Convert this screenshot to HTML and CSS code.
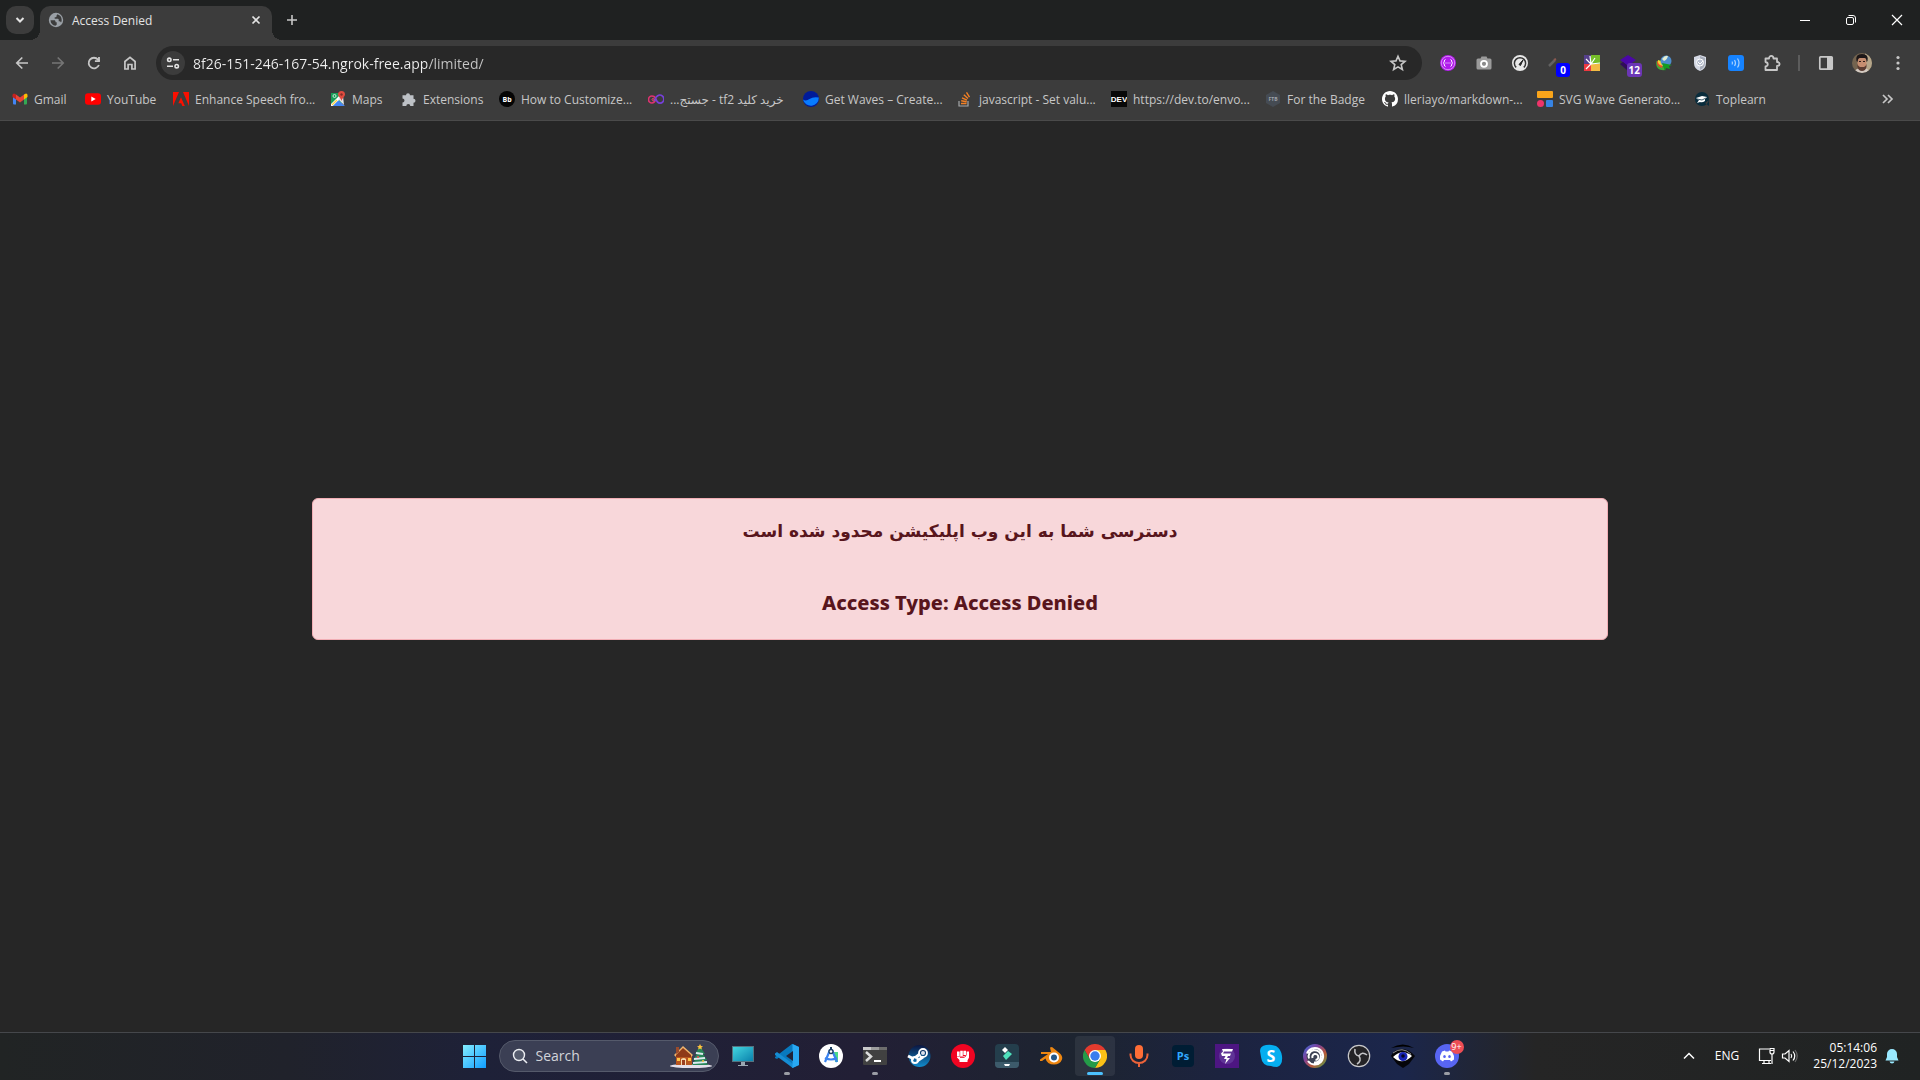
FILE: index.html
```
<!DOCTYPE html>
<html lang="en">
<head>
<meta charset="utf-8">
<title>Access Denied</title>
<link rel="stylesheet" href="styles.css">
</head>
<body>
<div class="screen">
<header class="browser">
  <div class="tabstrip">
    <button class="tab-search" aria-label="Search tabs"><svg viewBox="0 0 16 16" width="16" height="16"><path d="M4.5 6 8 9.5 11.500 6" fill="none" stroke="#e3e3e3" stroke-width="2"/></svg></button>
    <div class="tab">
      <svg viewBox="0 0 16 16" width="16" height="16"><circle cx="8" cy="8" r="7.200" fill="#9aa0a6"/><path d="M2.500 8.200h3.700c.9 0 1.300.6 1.300 1.300v.8h1.200v2.500l-1.300.9C4.700 13.500 2.600 11.300 2.500 8.200ZM9 2.300c2.800.4 4.700 2.700 4.700 5.600 0 1-.3 1.900-.7 2.600-.3-.8-.9-1.200-1.700-1.200h-.6V7.600c0-.5-.3-.8-.8-.8H6.700V5.300h1c.5 0 .8-.3.8-.8V3.400c.5 0 .7-.6.5-1.100Z" fill="#3c3c3c"/></svg>
      <span class="tab-title">Access Denied</span>
      <button class="icon-button tab-close" aria-label="Close tab"><svg viewBox="0 0 16 16" width="16" height="16"><path d="m4.500 4.500 7 7m0-7-7 7" stroke="#e3e3e3" stroke-width="1.700"/></svg></button>
    </div>
    <button class="icon-button new-tab" aria-label="New tab"><svg viewBox="0 0 16 16" width="16" height="16"><path d="M8 3v10M3 8h10" stroke="#c7c7c7" stroke-width="1.600"/></svg></button>
    <div class="window-controls">
      <button aria-label="Minimize"><svg viewBox="0 0 12 12" width="12" height="12"><path d="M1 6.500h10" stroke="#fff"/></svg></button>
      <button aria-label="Restore"><svg viewBox="0 0 12 12" width="12" height="12"><rect x="1.500" y="3.500" width="7" height="7" rx="1.500" fill="none" stroke="#fff"/><path d="M3.500 1.500H8a2.500 2.500 0 0 1 2.500 2.500v4.500" fill="none" stroke="#fff"/></svg></button>
      <button aria-label="Close"><svg viewBox="0 0 12 12" width="12" height="12"><path d="m1 1 10 10M11 1 1 11" stroke="#fff" stroke-width="1.200"/></svg></button>
    </div>
  </div>

  <div class="toolbar">
    <nav class="nav">
      <button class="icon-button" aria-label="Back"><svg viewBox="0 0 16 16" width="16" height="16"><path d="M14 8H3m5.300-5.500L2.800 8l5.500 5.500" fill="none" stroke="#c7c7c7" stroke-width="1.700"/></svg></button>
      <button class="icon-button" aria-label="Forward" disabled><svg viewBox="0 0 16 16" width="16" height="16"><path d="M2 8h11M7.700 2.500 13.200 8l-5.500 5.500" fill="none" stroke="#757575" stroke-width="1.700"/></svg></button>
      <button class="icon-button" aria-label="Reload"><svg viewBox="0 0 16 16" width="16" height="16"><path d="M12.900 10A5.300 5.300 0 1 1 12 4.600L13.500 6.300" fill="none" stroke="#c7c7c7" stroke-width="1.800"/><path d="M13.900 2v5H8.900V5.300h3.200V2Z" fill="#c7c7c7"/></svg></button>
      <button class="icon-button" aria-label="Home"><svg viewBox="0 0 16 16" width="16" height="16"><path d="M2.900 14V6.500L8 2.300l5.100 4.200V14H9.900V9.500H6.100V14Z" fill="none" stroke="#c7c7c7" stroke-width="1.700"/></svg></button>
    </nav>
    <div class="omnibox">
      <button class="site-info" aria-label="View site information"><svg viewBox="0 0 16 16" width="16" height="16" fill="none" stroke="#e3e3e3" stroke-width="1.600"><circle cx="4.300" cy="4.800" r="1.700"/><path d="M8 4.800h6M2 11.200h6"/><circle cx="11.700" cy="11.200" r="1.700"/></svg></button>
      <input class="url" type="text" aria-label="Address" value="8f26-151-246-167-54.ngrok-free.app/limited/">
      <button class="icon-button" aria-label="Bookmark this page"><svg viewBox="0 0 18 18" width="18" height="18"><path d="m9 2.300 2 4.600 5 .4-3.800 3.300 1.200 4.900L9 12.900l-4.400 2.600 1.200-4.900L2 7.300l5-.4Z" fill="none" stroke="#c7c7c7" stroke-width="1.600"/></svg></button>
    </div>
    <div class="extensions">
      <button class="icon-button" aria-label="Code tool"><svg viewBox="0 0 16 16" width="16" height="16"><circle cx="8" cy="8" r="8" fill="#b01aeb"/><circle cx="8" cy="8" r="6.700" fill="none" stroke="#e9b5fa" stroke-width=".7"/><path d="M5.500 4.500c-1.600 0-.6 2.800-2.200 3.500 1.600.7.600 3.500 2.200 3.500m5-7c1.600 0 .6 2.800 2.200 3.500-1.600.7-.6 3.500-2.200 3.500M5.500 8h1m1 0h1m1 0h1" fill="none" stroke="#fff"/></svg></button>
      <button class="icon-button" aria-label="Screenshot"><svg viewBox="0 0 16 16" width="16" height="16"><path d="M2 3.500h2.500L5.500 1.500h5l1 2H14q1.500 0 1.500 1.500v8q0 1.500-1.500 1.500H2Q.5 14.500.5 13V5Q.5 3.500 2 3.500Z" fill="#9b9b9b"/><circle cx="8" cy="8.800" r="3" fill="#8b8b8b" stroke="#fff" stroke-width="1.800"/></svg></button>
      <button class="icon-button" aria-label="Speed"><svg viewBox="0 0 16 16" width="16" height="16"><circle cx="8" cy="8" r="8" fill="#e8e8e8"/><path d="M4.200 12.400A5.600 5.600 0 1 1 11.800 12.400" fill="none" stroke="#333" stroke-width="1.500"/><path d="m7 9.500 4-4.500-2.500 5.500Z" fill="#222" stroke="#222"/></svg></button>
      <button class="icon-button has-badge" aria-label="Picker, 0"><svg viewBox="0 0 16 16" width="16" height="16"><path d="m1 11 6-6" stroke="#626262" stroke-width="2.500"/><path d="m6 5 2-1" stroke="#8b5950" stroke-width="2"/></svg><span class="badge blue">0</span></button>
      <button class="icon-button" aria-label="Colours"><svg viewBox="0 0 16 16" width="16" height="16"><path d="M0 0h7v9H0Z" fill="#55408b"/><path d="M7 0h9v9H7Z" fill="#75bd29"/><path d="M0 9h7v7H0Z" fill="#ee3940"/><path d="M7 9h9v7H7Z" fill="#f2bb43"/><path d="M7 9 2 4m5 5L6 1m1 8 4-6M7 9l9-1M7 9 2 14" stroke="#fff" stroke-width="1.200"/></svg></button>
      <button class="icon-button has-badge" aria-label="Stack, 12"><svg viewBox="0 0 16 16" width="16" height="16"><path d="m8 0 8 5-8 6-8-6Z" fill="#4b07a8"/><path d="m0 9 3-2 5 4v5Z" fill="#310b5c"/></svg><span class="badge purple">12</span></button>
      <button class="icon-button" aria-label="Download manager"><svg viewBox="0 0 16 16" width="16" height="16"><path d="M9 15C3 16-1 12 .5 6L5 5Z" fill="#43a736"/><path d="M1 6Q0 11 6 13L7 9Z" fill="#e94a2d"/><path d="M2 5Q1 10 7 11L7 7Z" fill="#f6d434"/><circle cx="10" cy="6" r="5.500" fill="#4d8dcc"/><path d="M6 4q3-4 6-3-1 4-4 5Z" fill="#e4eed4"/><path d="m6 8 10 2-3 1 1 3-4-1-1 3Z" fill="#139c20"/></svg></button>
      <button class="icon-button" aria-label="Shield"><svg viewBox="0 0 16 16" width="16" height="16"><path d="m8 0 6 2v6q0 6-6 8-6-2-6-8V2Z" fill="#d5d9e5"/><path d="m8 1 5 2v5q0 5-5 7Z" fill="#a7adba"/><circle cx="8" cy="7.500" r="3.500" fill="#b8bfcf" stroke="#fff"/><path d="m6 7 2 2 3-3" fill="none" stroke="#fff"/></svg></button>
      <button class="icon-button" aria-label="Read aloud"><svg viewBox="0 0 16 16" width="16" height="16"><rect width="16" height="16" rx="3" fill="#1683ff"/><path d="M4 6.500q1 1.500 0 3M6.500 5q2 3 0 6M9.500 3.500q3 4.500 0 9" fill="none" stroke="#a6d1ff" stroke-width="1.200"/></svg></button>
      <button class="icon-button" aria-label="Extensions"><svg viewBox="0 0 18 18" width="18" height="18"><path d="M2.500 4.500H6c0-3.500 4.500-3.500 4.500 0h3.500V8c3.500 0 3.500 4 0 4v4H2.500v-3.500c3-.5 3-4 0-4.500Z" fill="none" stroke="#c7c7c7" stroke-width="1.800" stroke-linejoin="round"/></svg></button>
      <span class="divider"></span>
      <button class="icon-button" aria-label="Side panel"><svg viewBox="0 0 16 16" width="16" height="16"><rect x="1.800" y="1.800" width="12.400" height="12.400" rx=".8" fill="none" stroke="#c7c7c7" stroke-width="1.700"/><path d="M9 2h5v12H9Z" fill="#c7c7c7"/></svg></button>
      <button class="icon-button" aria-label="Profile"><svg viewBox="0 0 20 20" width="20" height="20"><defs><clipPath id="face"><circle cx="10" cy="10" r="10"/></clipPath></defs><g clip-path="url(#face)"><path d="M0 0h20v20H0Z" fill="#74644f"/><path d="M13 0h7v20h-7Z" fill="#b5a68a"/><path d="M2 20q1-5 8-5t8 5Z" fill="#d3cac2"/><path d="M5.500 7q0-4 4.500-4t4.500 4v4q-1 6-4.500 6T5.500 11Z" fill="#c58d70"/><path d="M4.500 8Q3 1 10 1t5.500 7l-1 1q0-4-2-4H8Q6 5 5.500 9Z" fill="#1d1718"/><path d="M5.500 11q1 3 2.500 3h4q1.500 0 2.500-3v3q-1 4-4.500 4t-4.500-4Z" fill="#5a3b31"/><path d="M7 8.500h2m2 0h2" stroke="#2d1c18"/></g></svg></button>
      <button class="icon-button" aria-label="Menu"><svg viewBox="0 0 16 16" width="16" height="16" fill="#c7c7c7"><circle cx="8" cy="2.500" r="1.600"/><circle cx="8" cy="8" r="1.600"/><circle cx="8" cy="13.500" r="1.600"/></svg></button>
    </div>
  </div>

  <nav class="bookmarks">
    <a href="#"><svg viewBox="0 0 16 16" width="16" height="16"><path d="M1 4v8.500q0 1 1 1h2V6Z" fill="#4285f4"/><path d="M15 4v8.500q0 1-1 1h-2V6Z" fill="#34a853"/><path d="M12 3.500 14 2.400q1.500 0 1.500 1.600v2L12 8.500Z" fill="#fbbc04"/><path d="m4 3.500 4 3 4-3v5l-4 3-4-3Z" fill="#ea4335"/><path d="M4 3.500 2.200 2.400Q.5 2.500.5 4v2L4 8.500Z" fill="#c5221f"/></svg><span>Gmail</span></a>
    <a href="#"><svg viewBox="0 0 16 16" width="16" height="16"><rect y="2.200" width="16" height="11.600" rx="3" fill="#f00"/><path d="m6.300 5.500 4.400 2.500-4.400 2.500Z" fill="#fff"/></svg><span>YouTube</span></a>
    <a href="#"><svg viewBox="0 0 16 16" width="16" height="16" fill="#fa0f00"><path d="M0 1h6L0 15ZM10 1h6v14ZM8 6.200l3.800 8.800H9.300l-1.100-2.800H5.400Z"/></svg><span>Enhance Speech fro...</span></a>
    <a href="#"><svg viewBox="0 0 16 16" width="16" height="16"><path d="M1 2h11v12H1Z" fill="#1a9d58"/><path d="m1 14 6-6 8 7H2Z" fill="#4b87ee"/><path d="M1 13 9 5l2 2-8 8H1Z" fill="#fff"/><path d="m8 8 5-3 1 9Z" fill="#e2e5e8"/><path d="m3 15 5-5 5 5Z" fill="#4285f4"/><circle cx="4.500" cy="5" r="1.500" fill="none" stroke="#cce9d8"/><path d="M11.500 0a3.500 3.500 0 0 0-3.500 3.500c0 2 2.500 3 3.500 6.500 1-3.500 3.500-4.500 3.500-6.500A3.500 3.500 0 0 0 11.500 0Z" fill="#df4b3f"/><circle cx="11.500" cy="3.500" r="1.200" fill="#842e29"/><path d="m2 14 5-5" stroke="#fbd14b" stroke-width="1.500"/></svg><span>Maps</span></a>
    <a href="#"><svg viewBox="0 0 16 16" width="16" height="16"><path d="M1.500 4.300H5a2 2 0 1 1 4 0h3.500v3.500a2 2 0 1 1 0 4V15H9.300a2 2 0 0 0-4 0H1.500v-3.600a2 2 0 0 0 0-4Z" fill="#bdc1c6"/></svg><span>Extensions</span></a>
    <a href="#"><svg viewBox="0 0 16 16" width="16" height="16"><circle cx="8" cy="8" r="8" fill="#050505"/><text x="8" y="10.500" text-anchor="middle" class="bb-mark">Bb</text></svg><span>How to Customize...</span></a>
    <a href="#"><svg viewBox="0 0 16 16" width="16" height="16" fill="none" stroke-width="1.700"><path d="M8 8c-1.500 3.500-3 4-4 4a3.400 3.400 0 0 1 0-7c2 0 3 .8 4 3" stroke="#df3271"/><path d="M6.500 10q1-5 5-6a4 4 0 1 1 .5 8.200Q9 12 8 8" stroke="#7640da"/><circle cx="5" cy="8.500" r="1" stroke="#e44f68" stroke-width="1"/></svg><span dir="rtl">خرید کلید tf2 - جستج...</span></a>
    <a href="#"><svg viewBox="0 0 16 16" width="16" height="16"><circle cx="8" cy="8" r="8" fill="#001b99"/><path d="M0 8.500q3 2 6.500-.5t9.300-1.500A8 8 0 0 1 0 8.500Z" fill="#087cff"/></svg><span>Get Waves – Create...</span></a>
    <a href="#"><svg viewBox="0 0 16 16" width="16" height="16" fill="none"><path d="M2 10v5h9v-5" stroke="#a5a7a9" stroke-width="1.200"/><path d="M4 12.500h5.500M4.200 9.700l5.500 1M5 6.800l5 2.400M6.800 3.800l4.200 3.700M9.500 1.300l3 4.800" stroke="#f48024" stroke-width="1.400"/></svg><span>javascript - Set valu...</span></a>
    <a href="#"><svg viewBox="0 0 16 16" width="16" height="16"><path d="M0 0h16v16H0Z" fill="#080808"/><text x="8" y="11" text-anchor="middle" class="dev-mark">DEV</text></svg><span>https://dev.to/envo...</span></a>
    <a href="#"><svg viewBox="0 0 16 16" width="16" height="16"><path d="m8 0 7 4v8l-7 4-7-4V4Z" fill="#454b53"/><text x="8" y="10" text-anchor="middle" class="badge-mark">FTB</text></svg><span>For the Badge</span></a>
    <a href="#"><svg viewBox="0 0 16 16" width="16" height="16"><path fill="#fff" d="M8 0C3.580 0 0 3.580 0 8c0 3.540 2.290 6.530 5.470 7.590.4.070.55-.17.55-.38 0-.19-.01-.82-.01-1.490-2.010.37-2.530-.49-2.690-.94-.09-.23-.48-.94-.82-1.130-.28-.15-.68-.52-.01-.53.63-.01 1.080.58 1.230.82.72 1.210 1.870.87 2.330.66.07-.52.28-.87.51-1.070-1.780-.2-3.640-.89-3.640-3.950 0-.87.310-1.590.82-2.150-.08-.2-.36-1.020.08-2.120 0 0 .67-.21 2.200.82.64-.18 1.320-.27 2-.27s1.360.09 2 .27c1.530-1.040 2.200-.82 2.200-.82.44 1.100.16 1.920.08 2.120.51.56.82 1.270.82 2.150 0 3.070-1.870 3.750-3.650 3.950.29.25.54.73.54 1.480 0 1.070-.01 1.930-.01 2.200 0 .21.15.46.55.38A8 8 0 0 0 16 8c0-4.420-3.580-8-8-8"/></svg><span>lleriayo/markdown-...</span></a>
    <a href="#"><svg viewBox="0 0 16 16" width="16" height="16"><rect width="16" height="7" rx="1" fill="#faa51a"/><circle cx="3.500" cy="12.500" r="3.500" fill="#ee346a"/><rect x="9" y="9" width="7" height="7" rx="1" fill="#3784e4"/></svg><span>SVG Wave Generato...</span></a>
    <a href="#"><svg viewBox="0 0 16 16" width="16" height="16"><path d="M8 1a7 7 0 1 1-.1 14A7 7 0 0 1 8 1Zm3 11 4 3V9Z" fill="#092c3c"/><path d="m2 7 6-2 5 1-2 2v2q-3 2-5 1l-3 1 2-3Z" fill="#fff"/><path d="m3 8 5 1 4-2" fill="none" stroke="#426170"/></svg><span>Toplearn</span></a>
    <button class="icon-button more" aria-label="More bookmarks"><svg viewBox="0 0 16 16" width="16" height="16"><path d="m3 4 4 4-4 4m5-8 4 4-4 4" fill="none" stroke="#c7c7c7" stroke-width="1.700"/></svg></button>
  </nav>
</header>

<main class="page">
  <div class="alert" role="alert">
    <p dir="rtl" lang="fa" class="message-fa">دسترسی شما به این وب اپلیکیشن محدود شده است</p>
    <p class="message-en">Access Type: Access Denied</p>
  </div>
</main>

<footer class="taskbar">
  <div class="apps">
    <button class="app" aria-label="Start"><svg viewBox="0 0 24 24" width="24" height="24"><defs><linearGradient id="win" x2="1" y2="1"><stop stop-color="#84edff"/><stop offset="1" stop-color="#109dff"/></linearGradient></defs><path d="M1 1h11v11H1ZM13 1h11v11H13ZM1 13h11v11H1ZM13 13h11v11H13Z" fill="url(#win)"/></svg></button>
    <label class="search">
      <svg viewBox="0 0 16 16" width="16" height="16"><circle cx="7" cy="7" r="5.500" fill="#555b6d" stroke="#eceef2" stroke-width="1.400"/><path d="m11 11 4 4" stroke="#eceef2" stroke-width="1.600"/></svg>
      <input type="text" placeholder="Search" aria-label="Search">
      <svg class="holiday" viewBox="0 0 42 24" width="42" height="24"><ellipse cx="21" cy="22" rx="21" ry="2" fill="#e4dfea"/><path d="M6 10h16v11H6Z" fill="#b8551f"/><path d="m4 11 9-9 10 9-2 2-8-8-7 8Z" fill="#efb46d"/><path d="m6 11 7-7 8 7v2H6Z" fill="#8e3918"/><path d="M11 21v-6q3-2 5 0v6Z" fill="#f4d7ab"/><path d="M12 21v-5h3v5Z" fill="#9b3e20"/><path d="M7 14h3v3H7Zm11 0h3v3h-3Z" fill="#ffc64b"/><path d="M6 3h3v5l-3 2Z" fill="#9b4b2c"/><path d="m30 2 5 8h-2l4 6h-2l3 5H22l3-5h-2l4-6h-2Z" fill="#278557"/><path d="m26 9 7 1m-9 5 11-1m-12 5 14-1" stroke="#dce9ef" stroke-width="2"/><path d="m30 0 1 2 2 .2-1.600 1.400.5 2-1.900-1-1.900 1 .5-2L27 2.200l2-.2Z" fill="#ffc33d"/><circle cx="28" cy="13" r="1" fill="#ef4d52"/><circle cx="33" cy="17" r="1" fill="#ffbe3b"/></svg>
    </label>
    <button class="app" aria-label="Desktop"><svg viewBox="0 0 24 24" width="24" height="24"><defs><linearGradient id="desk" x2="1" y2="1"><stop stop-color="#45d8e1"/><stop offset="1" stop-color="#087fab"/></linearGradient></defs><rect x="1.500" y="2.500" width="21" height="15" fill="url(#desk)" stroke="#56727f"/><path d="M10 18h4v3h3v1H7v-1h3Z" fill="#9aa7b1"/></svg></button>
    <button class="app running" aria-label="Visual Studio Code"><svg viewBox="0 0 24 24" width="24" height="24"><path d="M17.500 0 24 3v18l-6.500 3L5 12.500 2 15 0 14v-1L17 0Z" fill="#0879be"/><path d="M0 9.500 2 8l16 12v4L0 11Z" fill="#168dd4"/><path d="M17.500 0 24 3v18l-6.500 3Z" fill="#28a8f2"/><path d="M18 7v10l-7-5Z" fill="#202338"/></svg></button>
    <button class="app" aria-label="Android Studio"><svg viewBox="0 0 24 24" width="24" height="24"><circle cx="12" cy="12" r="12" fill="#fff"/><path d="M15 8h4v10h-3Z" fill="#4bdb89"/><path d="M11 6 6 18M13 6l5 12M6 14q6 3 12 0" fill="none" stroke="#3b83ef" stroke-width="2.200"/><circle cx="12" cy="7.500" r="2" fill="#fff" stroke="#1b3e61" stroke-width="1.300"/><path d="M12 3v3" stroke="#1b3e61" stroke-width="2"/></svg></button>
    <button class="app running" aria-label="Terminal"><svg viewBox="0 0 24 24" width="24" height="24"><rect y="3" width="24" height="18" rx="1" fill="#414141"/><path d="M0 3h8v3H0Z" fill="#c9c9c9"/><path d="M8 3h8v3H8Z" fill="#9d9d9d"/><path d="M16 3h8v3h-8Z" fill="#6d6d6d"/><path d="m3 8 5 4.500L3 17" fill="none" stroke="#ddd" stroke-width="2.500"/><path d="M11 17h7" stroke="#fff" stroke-width="2"/></svg></button>
    <button class="app" aria-label="Steam"><svg viewBox="0 0 24 24" width="24" height="24"><defs><linearGradient id="steam" x2="0" y2="1"><stop stop-color="#0b1540"/><stop offset="1" stop-color="#118ccc"/></linearGradient></defs><circle cx="12.500" cy="12" r="11" fill="url(#steam)"/><circle cx="16" cy="9" r="4" fill="none" stroke="#fff" stroke-width="1.800"/><circle cx="16" cy="9" r="2" fill="#dce1ea"/><path d="m13 10-5 4m8-1-6 4M1 12l6 3" stroke="#fff" stroke-width="3"/><circle cx="8" cy="16" r="3" fill="none" stroke="#fff" stroke-width="2"/></svg></button>
    <button class="app" aria-label="Fist app"><svg viewBox="0 0 24 24" width="24" height="24"><circle cx="12" cy="12" r="12" fill="#f00522"/><path d="M6 7.500h2.600V12H6Zm3.200-.8h2.600V12H9.200Zm3.200 0H15V11h-2.600Zm3.200.8H18v6l-1.500 3V18h-8v-2L6 13.500v-1h6l3.600-1Z" fill="#fff"/><path d="M9 13.500h4l2-1.500" fill="none" stroke="#f00522" stroke-width=".8"/></svg></button>
    <button class="app" aria-label="Filmora"><svg viewBox="0 0 24 24" width="24" height="24"><rect width="24" height="24" rx="4" fill="#243e4c"/><path d="M0 18h24v2q0 4-4 4H4q-4 0-4-4Z" fill="#3d5b6b"/><path d="m10 3 3 3-3 3-3-3Z" fill="#fff"/><path d="m13 7 4 3-6 6-3-4Z" fill="#4fe1bc"/><path d="M9 20h6l-1 2h-4Z" fill="#fff"/></svg></button>
    <button class="app" aria-label="Blender"><svg viewBox="0 0 24 24" width="24" height="24"><path d="M11 3.500 13 3l8 6.500q3 3 2 6-2 5-8 5-7 0-8.500-6L3 17H1v-1.500L9 10H2V8h10Z" fill="#ed8611"/><circle cx="15" cy="13.500" r="5" fill="#fff"/><circle cx="15" cy="13.500" r="3" fill="#265787"/></svg></button>
    <button class="app active" aria-label="Google Chrome"><svg viewBox="0 0 24 24" width="24" height="24"><path d="M1.600 6A12 12 0 0 1 22.400 6H12L6.800 15Z" fill="#e33b2e"/><path d="M22.400 6A12 12 0 0 1 12 24l5.200-9L12 6Z" fill="#fbc116"/><path d="M12 24A12 12 0 0 1 1.600 6l5.200 9h10.400Z" fill="#249b48"/><circle cx="12" cy="12" r="6" fill="#fff"/><circle cx="12" cy="12" r="4.700" fill="#397ded"/></svg></button>
    <button class="app" aria-label="Voice recorder"><svg viewBox="0 0 24 24" width="24" height="24"><rect x="8" y="1" width="8" height="14" rx="4" fill="#ff6d36"/><path d="M3.500 9.500V11a8.500 8 0 0 0 17 0V9.500M12 19v4" fill="none" stroke="#ed6339" stroke-width="2"/></svg></button>
    <button class="app" aria-label="Photoshop"><svg viewBox="0 0 24 24" width="24" height="24"><rect x="1" y="1" width="22" height="22" rx="4" fill="#001d34"/><text x="12" y="16" text-anchor="middle" class="ps-mark">Ps</text></svg></button>
    <button class="app" aria-label="Purple app"><svg viewBox="0 0 24 24" width="24" height="24"><path d="M0 0h24v24H0Z" fill="#4d1682"/><circle cx="12" cy="12" r="8" fill="#7150aa" opacity=".5"/><path d="M7 5h11l-1 2.500H9L8 9.500h8L15 12h-2l-1 2h3l-5 6 1.500-5H9l1.500-3H7L6 9.500l2-2Z" fill="#fff"/></svg></button>
    <button class="app" aria-label="Skype"><svg viewBox="0 0 24 24" width="24" height="24"><path d="M7 1q5-1 10 1 5 3 6 10 1 9-5 11-4 0-6-1Q3 22 2 13L1 7q0-5 6-6Z" fill="#05aef0"/><text x="12" y="18" text-anchor="middle" class="skype-mark">S</text></svg></button>
    <button class="app" aria-label="Ubisoft Connect"><svg viewBox="0 0 24 24" width="24" height="24"><defs><linearGradient id="ubi" x2="1" y2="1"><stop stop-color="#3570df"/><stop offset=".35" stop-color="#7f419c"/><stop offset=".65" stop-color="#b95a38"/><stop offset="1" stop-color="#3aaa50"/></linearGradient></defs><circle cx="12" cy="12" r="12" fill="url(#ubi)"/><circle cx="12" cy="12" r="8.500" fill="#3c4254"/><path d="M4 9.500A8.300 8.300 0 1 1 5 17M6 14.500a6.200 6.200 0 1 1 5 4M9.500 14a3 3 0 1 1 3 2" fill="none" stroke="#fff" stroke-width="2"/></svg></button>
    <button class="app" aria-label="OBS Studio"><svg viewBox="0 0 24 24" width="24" height="24"><circle cx="12" cy="12" r="10.700" fill="#242326" stroke="#c9c9cb" stroke-width="1.200"/><path d="M12 12Q7 11 8 5m4 7q3-5 8-1m-8 1q3 5-2 8" fill="none" stroke="#c4c4c7" stroke-width="1.600"/></svg></button>
    <button class="app" aria-label="Eye app"><svg viewBox="0 0 24 24" width="24" height="24"><path d="M0 4Q12-3 23 4q-10-3-23 0Z" fill="#000"/><path d="M0 12q3-7 11-7 7 0 13 7l-6 8-6 4-6-4Z" fill="#050509"/><path d="M2 13q9-9 19-1-10 10-19 1Z" fill="#fff"/><circle cx="12" cy="12.500" r="4.500" fill="#1824b4"/><circle cx="12" cy="12" r="1.800" fill="#050522"/><path d="M2 9q9-7 18 1" fill="none" stroke="#aaa" stroke-width=".8"/></svg></button>
    <button class="app running" aria-label="Discord"><svg viewBox="0 0 24 24" width="24" height="24"><circle cx="12" cy="12" r="12" fill="#5865f2"/><path d="M7 7.500 10 6.500l.5 1h3l.5-1 3 1q2.500 4 2 8L16 17.500l-1-1.500H9l-1 1.500-3-2q-.5-4 2-8Z" fill="#fff"/><ellipse cx="9.500" cy="12.500" rx="1.300" ry="1.600" fill="#5865f2"/><ellipse cx="14.500" cy="12.500" rx="1.300" ry="1.600" fill="#5865f2"/></svg><span class="notice">9+</span></button>
  </div>
  <div class="tray">
    <button class="icon-button" aria-label="Show hidden icons"><svg viewBox="0 0 12 12" width="12" height="12"><path d="m1 8.500 5-5 5 5" fill="none" stroke="#fff" stroke-width="1.500"/></svg></button>
    <button class="language">ENG</button>
    <button class="status" aria-label="Network and sound">
      <svg viewBox="0 0 18 18" width="18" height="18" fill="none" stroke="#fff" stroke-width="1.200"><path d="M12 2H2.500v11.500H14M5 16.500h9M7 14v2.500m5-2.500v2.500M15 7v10M13 1.500h4V5q0 2-2 2t-2-2Zm0 2h4"/></svg>
      <svg viewBox="0 0 18 18" width="18" height="18" fill="none" stroke="#fff" stroke-width="1.200"><path d="M1.500 7v4H4l4 3.500v-11L4 7ZM10 7q1.500 2 0 4m2-6.500q3.500 4.500 0 9"/><path d="M14 3q4.500 6 0 12" stroke="#666"/></svg>
    </button>
    <button class="clock"><time>05:14:06</time><time>25/12/2023</time></button>
    <button class="icon-button" aria-label="Notifications"><svg viewBox="0 0 16 16" width="16" height="16" fill="#99e9ff"><path d="M1.500 12.500 3 9V6a5 5 0 0 1 10 0v3l1.500 3.500ZM5.500 13.500h5q-.5 2-2.500 2t-2.500-2Z"/></svg></button>
  </div>
</footer>
</div>
</body>
</html>
```
FILE: styles.css
```
* { box-sizing: border-box; }
body { margin: 0; background: #262626; font-family: "Open Sans", "DejaVu Sans", sans-serif; font-size: 12px; color: #c7c7c7; }
button, input { font: inherit; color: inherit; border: 0; padding: 0; background: none; }
svg { display: block; flex: none; }
.screen { min-height: 100vh; display: flex; flex-direction: column; }
.icon-button { display: grid; place-items: center; width: 36px; height: 32px; flex: none; }

.browser { background: #3c3c3c; border-bottom: 1px solid #4a4a4a; }
.tabstrip { display: flex; align-items: flex-end; height: 40px; background: #1f2121; }
.tab-search { width: 28px; height: 28px; margin: 0 6px 6px; border-radius: 10px; background: #3c3c3c; display: grid; place-items: center; }
.tab { position: relative; display: flex; align-items: center; gap: 8px; width: 232px; height: 34px; padding: 0 0 6px 8px; border-radius: 10px 10px 0 0; background: #3c3c3c; color: #e3e3e3; }
.tab::before, .tab::after { content: ""; position: absolute; bottom: 0; width: 10px; height: 10px; }
.tab::before { left: -10px; background: radial-gradient(circle at 0 0, transparent 10px, #3c3c3c 10px); }
.tab::after { right: -10px; background: radial-gradient(circle at 100% 0, transparent 10px, #3c3c3c 10px); }
.tab-title { flex: 1; white-space: nowrap; }
.tab-close { width: 32px; height: 28px; }
.new-tab { height: 40px; margin-left: 2px; }
.window-controls { display: flex; margin-left: auto; }
.window-controls button { display: grid; place-items: center; width: 46px; height: 40px; }

.toolbar { display: flex; align-items: center; height: 46px; padding: 0 4px; }
.nav { display: flex; margin-right: 8px; }
.omnibox { flex: 1; display: flex; align-items: center; height: 34px; padding: 0 6px 0 5px; border-radius: 17px; background: #282828; }
.site-info { display: grid; place-items: center; width: 24px; height: 24px; border-radius: 12px; background: #3c3c3c; }
.url { flex: 1; min-width: 0; margin-left: 8px; font-size: 14px; background: linear-gradient(90deg, #f0f0f0 234px, #c7c7c7 234px); background-clip: text; -webkit-text-fill-color: transparent; outline: 0; }
.extensions { display: flex; align-items: center; margin-left: 8px; }
.has-badge { position: relative; }
.badge { position: absolute; right: 4px; bottom: 2px; min-width: 14px; height: 14px; padding: 0 2px; border-radius: 3px; color: #fff; font-size: 10px; font-weight: 700; line-height: 14px; text-align: center; }
.blue { background: #00f; }
.purple { background: #6b36b5; }
.divider { width: 2px; height: 16px; margin: 0 8px; background: #5c5c5c; }

.bookmarks { display: grid; grid-template-columns: 73px 88px 157px 71px 98px 149px 155px 154px 154px 154px 117px 155px 157px 1fr 36px; align-items: center; height: 34px; padding: 0 14px 8px 12px; }
.bookmarks a { display: flex; align-items: center; gap: 6px; height: 24px; color: inherit; text-decoration: none; white-space: nowrap; }
.bookmarks .more { height: 24px; }
.bb-mark { font: 700 7px "Open Sans", sans-serif; fill: #fff; }
.dev-mark { font: 700 8px "Liberation Sans", sans-serif; fill: #fff; }
.badge-mark { font: 700 5px "Open Sans", sans-serif; fill: #a0a4aa; }

.page { flex: 1; display: grid; align-items: center; justify-items: center; padding: 0 12px; }
.alert { width: 100%; max-width: 1296px; margin-bottom: 16px; padding: 16px 16px 20px; border: 1px solid #f1aeb5; border-radius: 6px; background: #f8d7da; color: #58151c; text-align: center; }
.alert p { margin: 0; font-family: "Noto Sans", sans-serif; font-size: 20px; line-height: 32px; font-weight: 800; }
.alert .message-fa { margin-bottom: 40px; font-family: "DejaVu Sans", sans-serif; font-size: 17px; font-weight: 700; }

.taskbar { display: grid; grid-template-columns: 1fr auto 1fr; align-items: center; height: 48px; border-top: 1px solid #45474b; background: linear-gradient(90deg, #212424 0%, #20222b 15%, #1e2138 25%, #221f35 45%, #1d2430 56%, #1c2340 64%, #1b264b 73%, #252525 80%, #202323 100%); }
.apps { grid-column: 2; display: flex; align-items: center; }
.app { position: relative; display: grid; place-items: center; width: 44px; height: 47px; padding-bottom: 2px; }
.app.running::after, .app.active::after { content: ""; position: absolute; bottom: 5px; left: 19px; width: 6px; height: 3px; border-radius: 2px; background: #9b9da5; }
.app.active::after { left: 14px; width: 16px; background: #4cc2ff; }
.app.active::before { content: ""; position: absolute; inset: 3px 2px 4px; border-radius: 4px; background: #ffffff12; }
.app svg { position: relative; }
.search { display: flex; align-items: center; width: 220px; height: 32px; margin: 0 2px 2px 3px; padding: 0 6px 0 12px; border: 1px solid #555a6b; border-radius: 16px; background: #3b3f54; }
.search input { flex: 1; min-width: 0; margin-left: 8px; font-size: 14px; outline: 0; }
.search input::placeholder { color: #d2d4da; opacity: 1; }
.ps-mark { font: 700 11px "Open Sans", sans-serif; fill: #31a8ff; }
.skype-mark { font: 700 16px "Open Sans", sans-serif; fill: #fff; }
.notice { position: absolute; top: 7px; right: 5px; width: 14px; height: 14px; border-radius: 7px; background: #ee4d55; color: #fff; font-size: 9px; line-height: 14px; }
.tray { grid-column: 3; justify-self: end; display: flex; align-items: center; padding: 0 13px 2px 0; color: #fff; font-size: 12px; }
.language { margin: 0 18px 0 8px; }
.status { display: flex; gap: 6px; }
.clock { display: grid; margin-left: 14px; font-size: 12px; line-height: 16px; text-align: right; }
.tray .icon-button:last-child { width: 30px; }
```
